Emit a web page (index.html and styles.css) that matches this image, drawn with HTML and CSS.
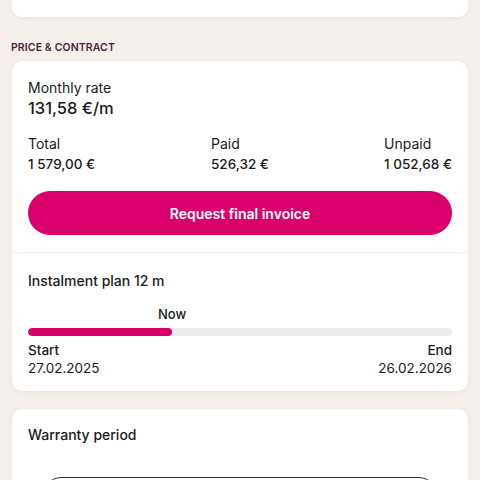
FILE: index.html
```html
<!DOCTYPE html>
<html lang="en">
<head>
    <meta charset="UTF-8">
    <meta name="viewport" content="width=device-width, initial-scale=1.0">
    <title>Price &amp; Contract</title>
    <link rel="stylesheet" href="styles.css">
</head>
<body>

<div class="page">
    <div class="card card-cut"></div>

    <h5 class="section-label">PRICE &amp; CONTRACT</h5>

    <div class="card">
        <div class="price">
            <p class="label">Monthly rate</p>
            <p class="rate">131,58 €/m</p>

            <div class="stats">
                <div>
                    <p class="label">Total</p>
                    <p class="value">1 579,00 €</p>
                </div>
                <div>
                    <p class="label">Paid</p>
                    <p class="value">526,32 €</p>
                </div>
                <div>
                    <p class="label">Unpaid</p>
                    <p class="value">1 052,68 €</p>
                </div>
            </div>

            <button class="btn-primary">Request final invoice</button>
        </div>

        <div class="plan">
            <h4>Instalment plan 12 m</h4>
            <div class="now"><span style="margin-left: 34%">Now</span></div>
            <div class="bar"><div class="bar-fill" style="width: 34%"></div></div>
            <div class="dates">
                <div>
                    <p class="date-label">Start</p>
                    <p>27.02.2025</p>
                </div>
                <div class="end">
                    <p class="date-label">End</p>
                    <p>26.02.2026</p>
                </div>
            </div>
        </div>
    </div>

    <div class="card warranty">
        <h4>Warranty period</h4>
        <button class="btn-outline"></button>
    </div>
</div>

</body>
</html>
```

FILE: styles.css
```css
body {
    font-family: Inter, "Open Sans", sans-serif;
    background: #f6f0ed;
    color: #1b1b1b;
    margin: 0;
    padding: 0;
}

p, h4, h5 {
    margin: 0;
}

.page {
    padding: 0 12px;
}

.card {
    background: white;
    border-radius: 10px;
    box-shadow: 0 1px 6px rgba(120, 90, 80, 0.08);
}

.card-cut {
    height: 17px;
    border-radius: 0 0 10px 10px;
}

.section-label {
    margin: 25px 0 7px -1px;
    font-size: 10.5px;
    font-weight: 600;
    letter-spacing: 0.1px;
    color: #4a1f3d;
    line-height: 12px;
}

.price {
    padding: 17px 16px 17px;
    border-bottom: 1px solid #eeeeee;
}

.label {
    font-size: 14px;
    line-height: 20px;
}

.rate {
    font-size: 16.5px;
    font-weight: 500;
    line-height: 20px;
}

.stats {
    display: grid;
    grid-template-columns: 183px 1fr auto;
    margin-top: 16px;
}

.value {
    font-size: 13.5px;
    font-weight: 500;
    line-height: 20px;
}

.btn-primary {
    display: block;
    width: 100%;
    height: 44px;
    margin-top: 17px;
    border: none;
    border-radius: 22px;
    background: #d9006c;
    color: white;
    font-family: inherit;
    font-size: 14px;
    font-weight: 600;
}

.plan {
    padding: 18px 16px 14px;
}

.plan h4, .warranty h4 {
    font-size: 14px;
    font-weight: 500;
    line-height: 20px;
}

.now {
    margin-top: 13px;
    font-size: 13px;
    font-weight: 500;
    line-height: 20px;
}

.now span {
    display: inline-block;
    transform: translateX(-50%);
}

.bar {
    margin-top: 4px;
    height: 8px;
    border-radius: 4px;
    background: #ededed;
    overflow: hidden;
}

.bar-fill {
    height: 100%;
    border-radius: 4px;
    background: #d9006c;
}

.dates {
    display: flex;
    justify-content: space-between;
    margin-top: 5px;
    font-size: 13.5px;
    line-height: 18px;
}

.date-label {
    font-weight: 500;
}

.end {
    text-align: right;
}

.warranty {
    margin-top: 18px;
    padding: 16px 16px 40px;
}

.btn-outline {
    display: block;
    width: calc(100% - 24px);
    height: 44px;
    margin: 32px auto 0;
    border: 1.5px solid #4a1f3d;
    border-radius: 22px;
    background: white;
}
```
